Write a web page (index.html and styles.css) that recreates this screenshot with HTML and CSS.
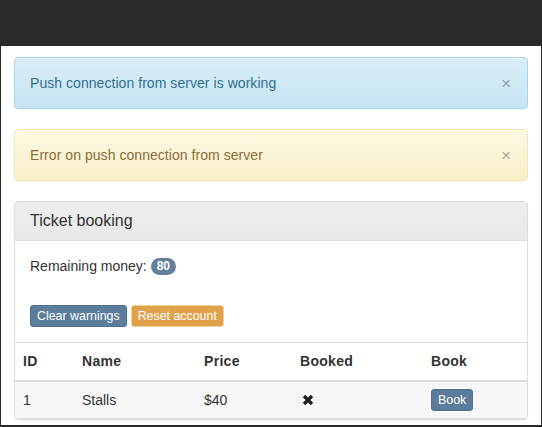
FILE: index.html
```html
<!DOCTYPE html>
<html>
<head>
<meta charset="utf-8">
<link rel="stylesheet" href="styles.css">
</head>
<body>
<div class="topbar"></div>
<div class="page">
  <div class="alert alert-info">
    <span>Push connection from server is working</span>
    <span class="close">×</span>
  </div>
  <div class="alert alert-warning">
    <span>Error on push connection from server</span>
    <span class="close">×</span>
  </div>
  <div class="panel">
    <div class="panel-heading"><h3 class="panel-title">Ticket booking</h3></div>
    <div class="panel-body">
      <p class="money">Remaining money: <span class="badge">80</span></p>
      <div class="actions">
        <button class="btn btn-primary">Clear warnings</button>
        <button class="btn btn-warning">Reset account</button>
      </div>
    </div>
    <table class="table">
      <thead>
        <tr><th class="c-id">ID</th><th class="c-name">Name</th><th class="c-price">Price</th><th class="c-booked">Booked</th><th class="c-book">Book</th></tr>
      </thead>
      <tbody>
        <tr class="odd">
          <td>1</td><td>Stalls</td><td>$40</td>
          <td><svg class="xicon" width="14" height="14" viewBox="0 0 14 14"><path d="M1.8 4.2 L4.2 1.8 L7 4.6 L9.8 1.8 L12.2 4.2 L9.4 7 L12.2 9.8 L9.8 12.2 L7 9.4 L4.2 12.2 L1.8 9.8 L4.6 7 Z" fill="#222"/></svg></td>
          <td><button class="btn btn-primary">Book</button></td>
        </tr>
      </tbody>
    </table>
  </div>
</div>
</body>
</html>
```

FILE: styles.css
```css
* { box-sizing: border-box; }
html, body { margin: 0; padding: 0; }
body {
  background: #2b2b2b;
  font-family: "Liberation Sans", Arial, sans-serif;
  font-size: 14px;
  line-height: 20px;
  color: #333;
  width: 542px;
  height: 427px;
  overflow: hidden;
}
.topbar { height: 46px; }
.page {
  background: #fff;
  margin: 0 1px;
  height: 379px;
  padding: 11px 13px 0;
  overflow: hidden;
}
.alert {
  display: flex;
  justify-content: space-between;
  align-items: center;
  padding: 15px 16px 15px 15px;
  border: 1px solid transparent;
  border-radius: 4px;
  margin-bottom: 20px;
  height: 52px;
  letter-spacing: 0.05px;
  box-shadow: inset 0 1px 0 rgba(255,255,255,.25), 0 1px 2px rgba(0,0,0,.05);
}
.alert-info {
  color: #31708f;
  background: linear-gradient(#d9edf7, #c6e4f3);
  border-color: #a9d4ea;
}
.alert-warning {
  color: #8a6d3b;
  background: linear-gradient(#fcf8e3, #f8efc8);
  border-color: #f3e7b0;
}
.close {
  font-size: 17px;
  font-weight: normal;
  color: #000;
  opacity: .3;
  line-height: 20px;
  margin-top: 1px;
}
.panel {
  border: 1px solid #ddd;
  border-radius: 4px;
  box-shadow: 0 1px 2px rgba(0,0,0,.05);
  overflow: hidden;
}
.panel-heading {
  padding: 10px 15px;
  background: linear-gradient(#eeeeee, #e8e8e8);
  border-bottom: 1px solid #ddd;
}
.panel-title {
  margin: 0;
  font-size: 16px;
  font-weight: normal;
  line-height: 18px;
  color: #333;
}
.panel-body { padding: 15px 15px 15px; }
.money { margin: 0 0 29px; }
.badge {
  display: inline-block;
  min-width: 10px;
  padding: 0 6px;
  font-size: 12px;
  font-weight: bold;
  line-height: 17px;
  color: #fff;
  text-align: center;
  background: #64819b;
  border-radius: 9px;
  vertical-align: 1px;
}
.actions { display: flex; gap: 4px; }
.btn {
  font-family: "Liberation Sans", Arial, sans-serif;
  font-size: 12.4px;
  line-height: 18px;
  padding: 1px 6px;
  border: 1px solid transparent;
  border-radius: 3px;
  color: #fff;
  cursor: pointer;
  height: 22px;
}
.btn-primary { background: #5b7d9b; border-color: #4f6f8c; }
.btn-warning { background: #e0a24b; border-color: #f0d29a; }
.table {
  width: 100%;
  border-collapse: collapse;
  border-spacing: 0;
}
.table th, .table td {
  padding: 8px;
  text-align: left;
  line-height: 20px;
  vertical-align: middle;
}
.table thead th {
  font-weight: bold;
  letter-spacing: 0.3px;
  border-top: 1px solid #ddd;
  border-bottom: 2px solid #ddd;
  height: 38px;
}
.table tbody td {
  border-bottom: 1px solid #ddd;
  height: 37px;
  padding-top: 7px;
  padding-bottom: 7px;
}
.table tr.odd { background: #f7f7f7; }
.c-id { width: 59px; }
.c-name { width: 122px; }
.c-price { width: 96px; }
.c-booked { width: 131px; }
.xicon { display: block; margin-left: 1px; }
```
